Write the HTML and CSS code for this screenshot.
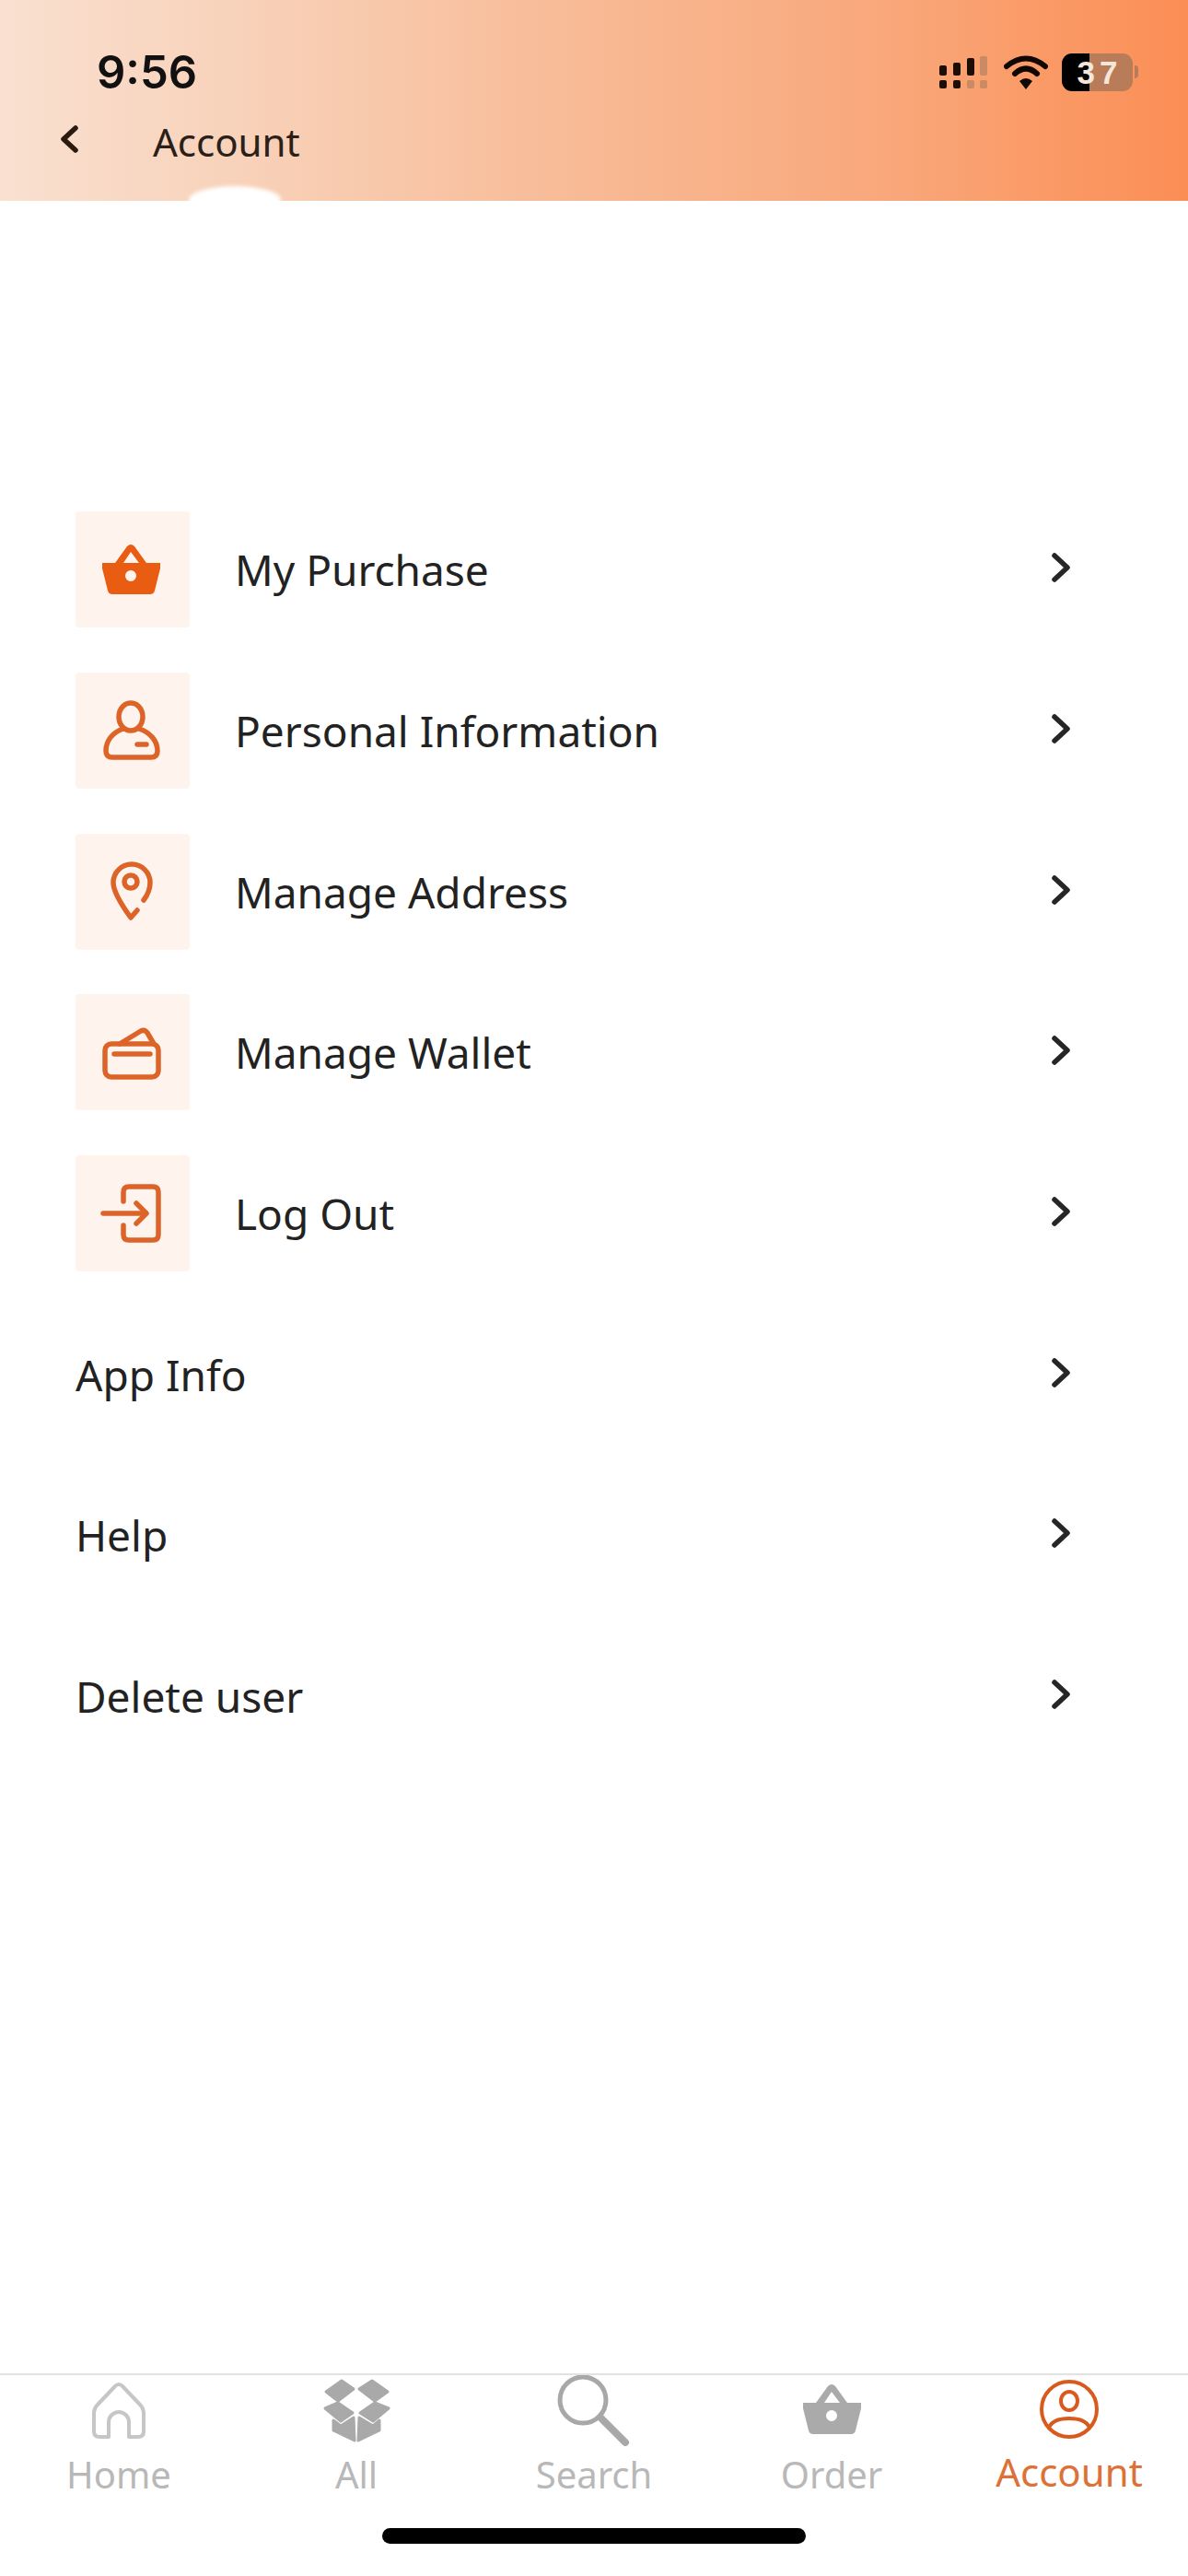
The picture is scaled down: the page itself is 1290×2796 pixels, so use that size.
FILE: index.html
```html
<!DOCTYPE html>
<html>
<head>
    <title>Account</title>
    <link rel="stylesheet" href="styles.css">
</head>
<body>
    <div class="page">
        <header class="header">
            <div class="status-bar">
                <div class="time">9:56</div>
                <div class="status-icons">
                    <svg class="signal" viewBox="0 0 52 35">
                        <rect x="0" y="10" width="8" height="11" rx="2" fill="#1c0d05"/>
                        <rect x="15" y="7" width="8" height="14" rx="2" fill="#1c0d05"/>
                        <rect x="30" y="2" width="8" height="19" rx="2" fill="#1c0d05"/>
                        <rect x="44" y="0" width="8" height="21" rx="2" fill="#c98a64"/>
                        <rect x="0" y="26" width="8" height="9" rx="2" fill="#1c0d05"/>
                        <rect x="15" y="26" width="8" height="9" rx="2" fill="#1c0d05"/>
                        <rect x="30" y="26" width="8" height="9" rx="2" fill="#c98a64"/>
                        <rect x="44" y="26" width="8" height="9" rx="2" fill="#c98a64"/>
                    </svg>
                    <svg class="wifi" viewBox="0 0 48 37">
                        <path d="M3 12 Q24 -5 45 12" fill="none" stroke="#120803" stroke-width="6" stroke-linecap="round"/>
                        <path d="M12 20 Q24 9 36 20" fill="none" stroke="#120803" stroke-width="6" stroke-linecap="round"/>
                        <path d="M17 28 Q24 22 31 28 L24 37 Z" fill="#120803"/>
                    </svg>
                    <div class="battery">37</div>
                    <div class="battery-nub"></div>
                </div>
            </div>
            <div class="title-bar">
                <svg class="back" viewBox="0 0 22 30">
                    <path d="M18 3 L5 15 L18 27" fill="none" stroke="#2a1a10" stroke-width="5.5" stroke-linecap="round" stroke-linejoin="round"/>
                </svg>
                <div class="title">Account</div>
            </div>
            <div class="smudge"></div>
        </header>

        <div class="profile"></div>

        <div class="menu">
            <div class="row">
                <div class="icon-box">
                    <svg viewBox="0 0 120 122">
                        <path fill="#e85d12" fill-rule="evenodd" d="M27 54 H41 L54 36 Q58 32 62 36 L75 54 H90 V60 L84 84 Q83 88 79 88 H38 Q34 88 33 84 L27 60 Z M50 54 H67 L58 42 Z M58 62 A6 6 0 1 0 58 74 A6 6 0 1 0 58 62 Z"/>
                    </svg>
                </div>
                <div class="label">My Purchase</div>
                <svg class="chevron" viewBox="0 0 22 34"><path d="M4 4 L18 17 L4 30"/></svg>
            </div>
            <div class="row">
                <div class="icon-box">
                    <svg class="line-icon" viewBox="0 0 120 122">
                        <ellipse cx="58" cy="46" rx="13" ry="15"/>
                        <path d="M50 59 C38 63 31 72 31 83 Q31 90 38 90 H80 Q87 90 87 83 C87 72 79 63 67 59"/>
                        <path d="M65 76 H75"/>
                    </svg>
                </div>
                <div class="label">Personal Information</div>
                <svg class="chevron" viewBox="0 0 22 34"><path d="M4 4 L18 17 L4 30"/></svg>
            </div>
            <div class="row">
                <div class="icon-box">
                    <svg class="line-icon" viewBox="0 0 120 122">
                        <path d="M72 70 C78 62 79 56 79 51 A20 20 0 0 0 39 51 C39 62 50 78 58 89 L65 81"/>
                        <circle cx="58" cy="50" r="7"/>
                    </svg>
                </div>
                <div class="label">Manage Address</div>
                <svg class="chevron" viewBox="0 0 22 34"><path d="M4 4 L18 17 L4 30"/></svg>
            </div>
            <div class="row">
                <div class="icon-box">
                    <svg class="line-icon" viewBox="0 0 120 122">
                        <rect x="30" y="52" width="58" height="36" rx="7"/>
                        <path d="M40 63 H79"/>
                        <path d="M46 52 L69 38 Q73 36 76 40 L83 52"/>
                    </svg>
                </div>
                <div class="label">Manage Wallet</div>
                <svg class="chevron" viewBox="0 0 22 34"><path d="M4 4 L18 17 L4 30"/></svg>
            </div>
            <div class="row">
                <div class="icon-box">
                    <svg class="line-icon" viewBox="0 0 120 122">
                        <path d="M50 48 V38 Q50 32 56 32 H82 Q88 32 88 38 V84 Q88 90 82 90 H56 Q50 90 50 84 V74"/>
                        <path d="M28 61 H74"/>
                        <path d="M64 50 L75 61 L64 72"/>
                    </svg>
                </div>
                <div class="label">Log Out</div>
                <svg class="chevron" viewBox="0 0 22 34"><path d="M4 4 L18 17 L4 30"/></svg>
            </div>
            <div class="row">
                <div class="label plain">App Info</div>
                <svg class="chevron" viewBox="0 0 22 34"><path d="M4 4 L18 17 L4 30"/></svg>
            </div>
            <div class="row">
                <div class="label plain">Help</div>
                <svg class="chevron" viewBox="0 0 22 34"><path d="M4 4 L18 17 L4 30"/></svg>
            </div>
            <div class="row">
                <div class="label plain">Delete user</div>
                <svg class="chevron" viewBox="0 0 22 34"><path d="M4 4 L18 17 L4 30"/></svg>
            </div>
        </div>

        <nav class="tabbar">
            <div class="tab">
                <svg viewBox="0 0 90 80">
                    <path fill="none" stroke="#c6c6c6" stroke-width="4" stroke-linejoin="round" d="M24 67 Q18 67 18 61 V42 Q18 36 22 32 L41 12 Q45 8 49 12 L68 32 Q72 36 72 42 V61 Q72 67 66 67 H56 V51 A11 11 0 0 0 34 51 V67 Z"/>
                </svg>
                <div class="tab-label">Home</div>
            </div>
            <div class="tab">
                <svg viewBox="0 0 90 80">
                    <g fill="#a9a9a9" stroke="#a9a9a9" stroke-width="3" stroke-linejoin="round">
                        <polygon points="12,18 29,6 42,15 25,28"/>
                        <polygon points="48,15 62,6 79,18 65,28"/>
                        <polygon points="11,36 25,30 41,41 28,50"/>
                        <polygon points="65,30 80,36 63,50 49,41"/>
                        <polygon points="20,49 28,55 42,46 43,71 20,60"/>
                        <polygon points="70,49 63,55 48,46 47,71 70,60"/>
                    </g>
                </svg>
                <div class="tab-label">All</div>
            </div>
            <div class="tab">
                <svg viewBox="0 0 90 80">
                    <circle cx="33" cy="27" r="25" fill="none" stroke="#a8a8a8" stroke-width="5"/>
                    <path d="M52 46 L79 73" stroke="#a8a8a8" stroke-width="8" stroke-linecap="round"/>
                </svg>
                <div class="tab-label">Search</div>
            </div>
            <div class="tab">
                <svg viewBox="0 0 90 80">
                    <path transform="translate(-13 -24)" fill="#aaaaaa" fill-rule="evenodd" d="M27 54 H41 L54 36 Q58 32 62 36 L75 54 H90 V60 L84 84 Q83 88 79 88 H38 Q34 88 33 84 L27 60 Z M50 54 H67 L58 42 Z M58 62 A6 6 0 1 0 58 74 A6 6 0 1 0 58 62 Z"/>
                </svg>
                <div class="tab-label">Order</div>
            </div>
            <div class="tab active">
                <svg viewBox="0 0 90 80">
                    <g fill="none" stroke="#d95a1e" stroke-width="4">
                        <circle cx="45" cy="37" r="30"/>
                        <ellipse cx="45" cy="28" rx="9" ry="10"/>
                        <path d="M23 57 Q27 47 45 47 Q63 47 67 57"/>
                    </g>
                </svg>
                <div class="tab-label">Account</div>
            </div>
        </nav>
        <div class="home-bar"><div class="home-indicator"></div></div>
    </div>
</body>
</html>
```

FILE: styles.css
```css
body {
    margin: 0;
    padding: 0;
    font-family: "Noto Sans", "Open Sans", sans-serif;
    background-color: #fff;
}

.page {
    display: flex;
    flex-direction: column;
    width: 1290px;
    height: 2796px;
    overflow: hidden;
}

.header {
    position: relative;
    height: 218px;
    flex-shrink: 0;
    box-sizing: border-box;
    padding-top: 52px;
    background: linear-gradient(90deg, #f9e0d0 0%, #f8d2ba 20%, #f8b994 50%, #f9a77a 75%, #fb8e55 100%);
}

.status-bar {
    display: flex;
    align-items: center;
    justify-content: space-between;
    padding: 0 54px 0 105px;
    height: 52px;
}

.time {
    font-family: Inter, "Liberation Sans", sans-serif;
    font-size: 49px;
    font-weight: 600;
    color: #111;
}

.status-icons {
    display: flex;
    align-items: center;
}

.signal {
    width: 52px;
    height: 35px;
    margin-right: 18px;
}

.wifi {
    width: 48px;
    height: 37px;
    margin-right: 15px;
}

.battery {
    width: 77px;
    height: 41px;
    box-sizing: border-box;
    padding-left: 5px;
    border-radius: 11px;
    background: linear-gradient(90deg, #000 39%, #b97c58 39%);
    color: #f6e6da;
    font-family: "Liberation Sans", sans-serif;
    font-size: 35px;
    font-weight: bold;
    letter-spacing: 5px;
    line-height: 41px;
    text-align: center;
}

.battery-nub {
    width: 4px;
    height: 14px;
    margin-left: 2px;
    border-radius: 0 4px 4px 0;
    background-color: #b97c58;
}

.title-bar {
    display: flex;
    align-items: center;
    height: 44px;
    margin-top: 27px;
    padding-left: 64px;
}

.back {
    width: 22px;
    height: 30px;
    margin-right: 80px;
    margin-top: -4px;
}

.title {
    font-size: 42px;
    color: #2a2018;
}

/* white smear left over the bottom edge of the header */
.smudge {
    position: absolute;
    left: 205px;
    bottom: -14px;
    width: 100px;
    height: 30px;
    border-radius: 50%;
    background-color: #fff;
    filter: blur(2px);
}

.profile {
    height: 313px;
    flex-shrink: 0;
}

.menu {
    flex: 1;
}

.row {
    display: flex;
    align-items: center;
    height: 174.7px;
    padding: 0 127px 0 82px;
}

.icon-box {
    width: 124px;
    height: 126px;
    margin-right: 49px;
    flex-shrink: 0;
    border-radius: 4px;
    background-color: #fef4ed;
    display: flex;
    align-items: center;
    justify-content: center;
}

.icon-box svg {
    display: block;
    width: 120px;
    height: 122px;
}

.line-icon {
    fill: none;
    stroke: #dc6428;
    stroke-width: 5.5;
    stroke-linecap: round;
    stroke-linejoin: round;
}

.label {
    flex: 1;
    font-size: 46px;
    color: #222;
}

.chevron {
    width: 22px;
    height: 34px;
    margin-top: -4px;
    fill: none;
    stroke: #262626;
    stroke-width: 5.5;
    stroke-linecap: round;
    stroke-linejoin: round;
}

.tabbar {
    display: grid;
    grid-template-columns: repeat(5, 1fr);
    flex-shrink: 0;
    height: 168px;
    box-sizing: border-box;
    border-top: 2px solid #e2e2e2;
}

.tab {
    display: flex;
    flex-direction: column;
    align-items: center;
}

.tab svg {
    width: 90px;
    height: 80px;
}

.tab-label {
    margin-top: 1px;
    font-size: 40px;
    line-height: 54px;
    color: #b8b8b8;
}

.tab.active .tab-label {
    margin-top: -2px;
    font-size: 42px;
    color: #dc7238;
}

.home-bar {
    display: flex;
    justify-content: center;
    height: 52px;
    flex-shrink: 0;
}

.home-indicator {
    width: 460px;
    height: 17px;
    border-radius: 9px;
    background-color: #000;
}
```
